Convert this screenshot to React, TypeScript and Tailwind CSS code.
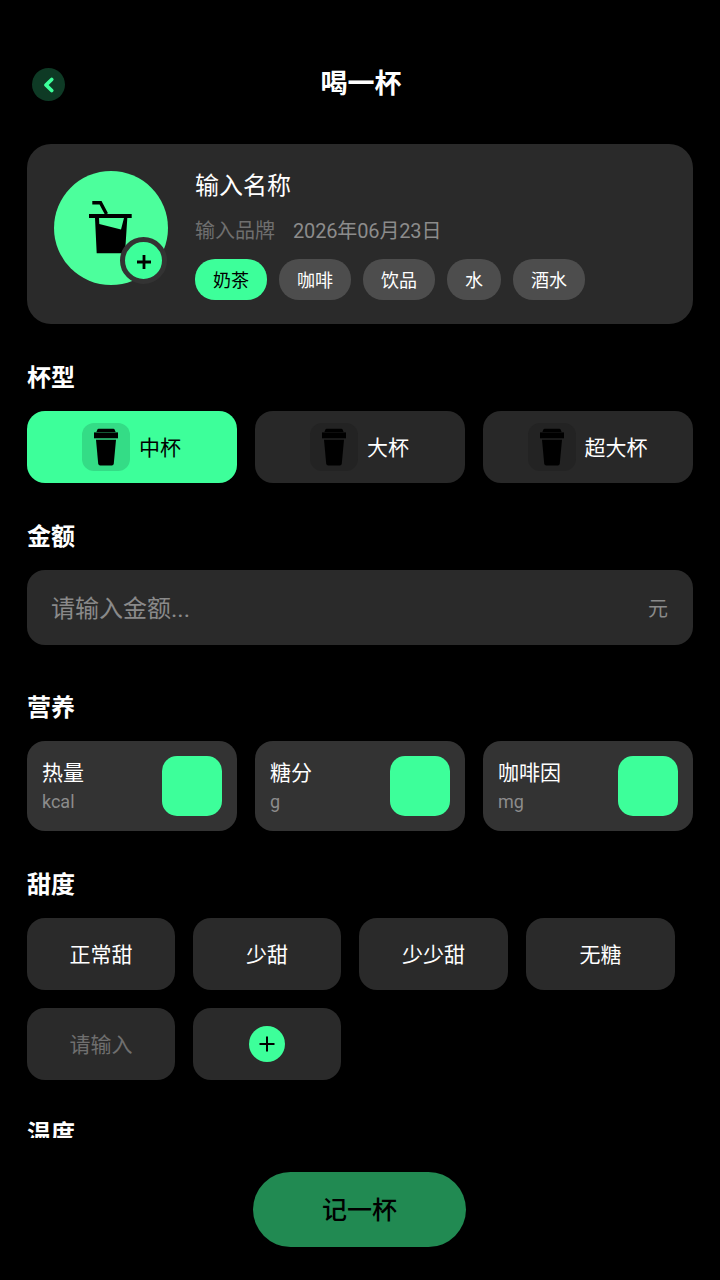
import React from 'react';

const font = { fontFamily: 'Roboto, "Noto Sans CJK SC", sans-serif' };

function Cup() {
  return (
    <svg width="24" height="38" viewBox="0 0 24 38" fill="#000">
      <path d="M2.4 4 L3.4 1.6 Q3.7 0.8 4.6 0.8 H19.4 Q20.3 0.8 20.6 1.6 L21.6 4 Z" />
      <path d="M0 4.4 H24 V10.3 H0 Z" />
      <path d="M2 11.7 H22 L19.8 35.5 Q19.6 37.4 17.8 37.4 H6.2 Q4.4 37.4 4.2 35.5 Z" />
    </svg>
  );
}

function SectionTitle({ children }: { children: React.ReactNode }) {
  return <h2 className="h-[34px] text-[24px] leading-[36px] font-bold text-white">{children}</h2>;
}

const tags = ['奶茶', '咖啡', '饮品', '水', '酒水'];
const cups = ['中杯', '大杯', '超大杯'];
const nutrition = [
  ['热量', 'kcal'],
  ['糖分', 'g'],
  ['咖啡因', 'mg'],
];
const sweetness = ['正常甜', '少甜', '少少甜', '无糖'];

export default function App() {
  return (
    <div className="w-[720px] h-[1280px] bg-black overflow-hidden" style={font}>
      <div className="h-[1138px] overflow-hidden px-[27px] pt-[68px]">
        {/* header */}
        <div className="relative flex h-[33px] items-center justify-center">
          <button className="absolute left-[5px] top-0 flex h-[33px] w-[33px] items-center justify-center rounded-full bg-[#0e3a25]">
            <svg width="14" height="18" viewBox="0 0 14 18" fill="none" stroke="#3dff9a" strokeWidth="3.8" strokeLinecap="round" strokeLinejoin="round">
              <path d="M9.7 3.5 L4 9 L9.7 14.5" />
            </svg>
          </button>
          <h1 className="pl-[2px] text-[27px] font-bold leading-[33px] text-white">喝一杯</h1>
        </div>

        {/* drink card */}
        <div className="mt-[43px] flex h-[180px] rounded-[24px] bg-[#2a2a2a] pl-[27px] pt-[27px]">
          <div className="relative h-[114px] w-[114px] shrink-0 rounded-full bg-[#4cff9c]">
            <svg className="absolute left-[34px] top-[29px]" width="46" height="54" viewBox="0 0 46 54" fill="#000">
              <path d="M4.3 2.8 H12.5 L18.5 14" fill="none" stroke="#000" strokeWidth="3.4" />
              <path d="M1 14 H43.7 V18 H1 Z" />
              <path d="M7 18 H39.3 L37 53.3 H8.7 Z M11 18 H36 L33 29.5 L11.3 24 Z" fillRule="evenodd" />
            </svg>
            <div className="absolute left-[66px] top-[66px] flex h-[47px] w-[47px] items-center justify-center rounded-full border-[5px] border-[#333333] bg-[#3dff9a]">
              <svg className="mt-[2px]" width="16" height="16" viewBox="0 0 16 16" stroke="#000" strokeWidth="2.8">
                <path d="M8 1 V15 M1 8 H15" />
              </svg>
            </div>
          </div>
          <div className="ml-[27px]">
            <div className="text-[24px] leading-[30px] text-white">输入名称</div>
            <div className="mt-[15px] flex h-[30px] items-center text-[20px] leading-[30px]">
              <span className="text-[#6f6f6f]">输入品牌</span>
              <span className="ml-[18px] tracking-[-0.15px] text-[#8c8c8c]">2026年06月23日</span>
            </div>
            <div className="mt-[13px] flex gap-[12px]">
              {tags.map((t, i) => (
                <span
                  key={t}
                  className={`flex h-[41px] items-center rounded-[20px] px-[18px] pt-[1px] text-[18px] ${
                    i === 0 ? 'bg-[#3dff9a] text-black' : 'bg-[#4d4d4d] text-white'
                  }`}
                >
                  {t}
                </span>
              ))}
            </div>
          </div>
        </div>

        {/* cup size */}
        <div className="mt-[36px]">
          <SectionTitle>杯型</SectionTitle>
          <div className="mt-[17px] grid grid-cols-3 gap-[18px]">
            {cups.map((c, i) => (
              <div
                key={c}
                className={`flex h-[72px] items-center justify-center gap-[9px] rounded-[18px] pr-[1px] text-[21px] ${
                  i === 0 ? 'bg-[#3dff9a] text-black' : 'bg-[#282828] text-white'
                }`}
              >
                <div className={`flex h-[48px] w-[48px] items-center justify-center rounded-[12px] ${i === 0 ? 'bg-[#34dc86]' : 'bg-[#232323]'}`}>
                  <Cup />
                </div>
                <span className="mt-[4px]">{c}</span>
              </div>
            ))}
          </div>
        </div>

        {/* price */}
        <div className="mt-[36px]">
          <SectionTitle>金额</SectionTitle>
          <div className="mt-[17px] flex h-[75px] items-center justify-between rounded-[18px] bg-[#2a2a2a] pl-[24px] pr-[25px] pt-[2px]">
            <span className="text-[24px] text-[#8a8a8a]">请输入金额...</span>
            <span className="text-[20px] text-[#8a8a8a]">元</span>
          </div>
        </div>

        {/* nutrition */}
        <div className="mt-[45px]">
          <SectionTitle>营养</SectionTitle>
          <div className="mt-[17px] grid grid-cols-3 gap-[18px]">
            {nutrition.map(([name, unit]) => (
              <div key={name} className="flex h-[90px] items-center justify-between rounded-[18px] bg-[#333333] pl-[15px] pr-[15px]">
                <div className="pt-[1px]">
                  <div className="text-[21px] leading-[30px] text-white">{name}</div>
                  <div className="mt-[1px] text-[18px] leading-[26px] text-[#8c8c8c]">{unit}</div>
                </div>
                <div className="h-[60px] w-[60px] rounded-[15px] bg-[#3dff9a]" />
              </div>
            ))}
          </div>
        </div>

        {/* sweetness */}
        <div className="mt-[36px]">
          <SectionTitle>甜度</SectionTitle>
          <div className="mt-[17px] grid w-[648px] grid-cols-[148px_148px_149px_149px] gap-[18px]">
            {sweetness.map((s) => (
              <div key={s} className="flex h-[72px] items-center justify-center rounded-[18px] bg-[#2a2a2a] pt-[4px] text-[21px] text-white">
                {s}
              </div>
            ))}
            <div className="flex h-[72px] items-center justify-center rounded-[18px] bg-[#2a2a2a] pt-[4px] text-[21px] text-[#6f6f6f]">请输入</div>
            <div className="flex h-[72px] items-center justify-center rounded-[18px] bg-[#2a2a2a]">
              <div className="flex h-[36px] w-[36px] items-center justify-center rounded-full bg-[#3dff9a]">
                <svg width="18" height="18" viewBox="0 0 18 18" stroke="#000" strokeWidth="2">
                  <path d="M9 1.5 V16.5 M1.5 9 H16.5" />
                </svg>
              </div>
            </div>
          </div>
        </div>

        {/* temperature, cut off by the scroll area */}
        <div className="mt-[36px]">
          <SectionTitle>温度</SectionTitle>
        </div>
      </div>

      <button className="ml-[253px] mt-[34px] flex h-[75px] w-[213px] items-center justify-center rounded-full bg-[#218a52] pt-[2px] text-[25px] font-medium text-black">
        记一杯
      </button>
    </div>
  );
}
